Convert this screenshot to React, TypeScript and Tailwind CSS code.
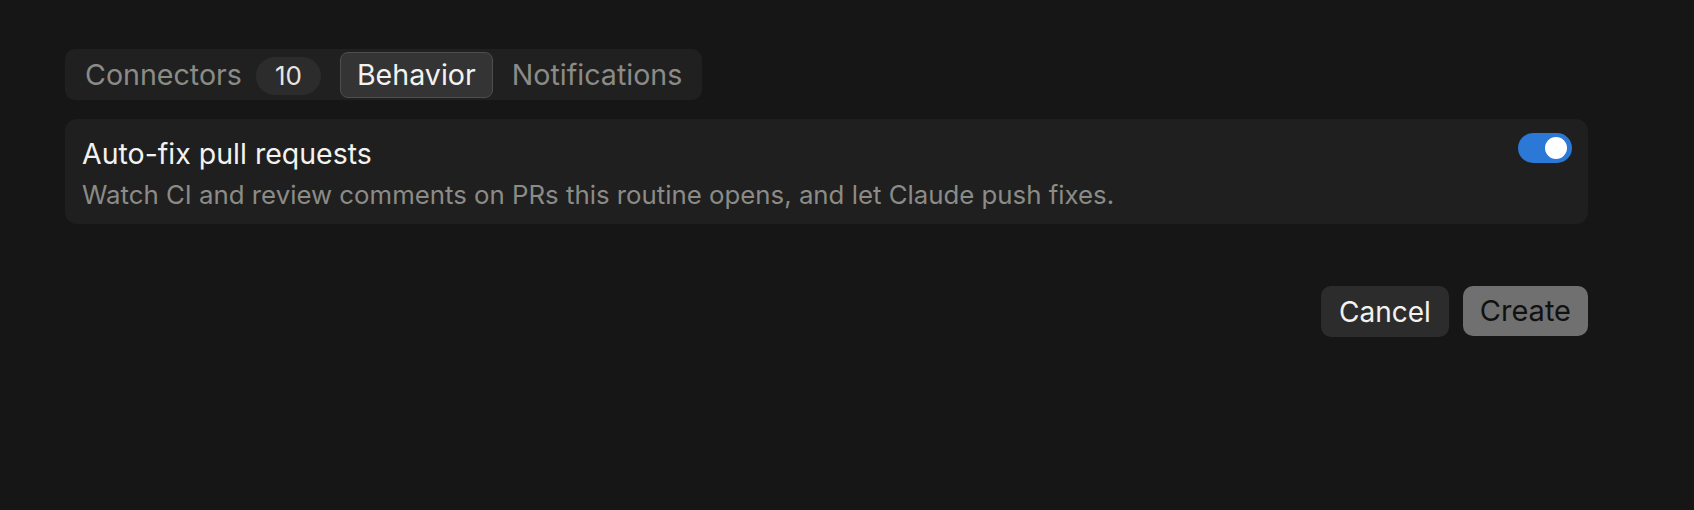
import { useState } from 'react';

const TABS = ['Connectors', 'Behavior', 'Notifications'];

export default function App() {
  const [tab, setTab] = useState('Behavior');
  const [autoFix, setAutoFix] = useState(true);

  return (
    <div
      className="w-full h-[510px] bg-[#161616] pt-[49px] pl-[65px] pr-[106px]"
      style={{ fontFamily: 'Inter, "Noto Sans", sans-serif' }}
    >
      {/* Tabs */}
      <div className="inline-flex items-center h-[51px] px-[3px] gap-[2px] rounded-[10px] bg-[#202020]">
        {TABS.map(t => (
          <button
            key={t}
            onClick={() => setTab(t)}
            className={
              t === tab
                ? 'flex items-center h-[46px] pt-[2px] px-[16px] rounded-[8px] bg-[#343434] border border-[#4e4e4e] text-[#f2f2f0] text-[28.6px]'
                : 'flex items-center h-[46px] pt-[2px] px-[16px] rounded-[8px] border border-transparent text-[#8b8b87] text-[28.6px]'
            }
          >
            {t}
            {t === 'Connectors' && (
              <span className="ml-[14px] flex items-center justify-center w-[65px] h-[38px] rounded-full bg-[#2c2c2c] text-[#e6e6e2] text-[26px]">
                10
              </span>
            )}
          </button>
        ))}
      </div>

      {/* Setting card */}
      <div className="mt-[19px] flex justify-between items-start rounded-[12px] bg-[#1f1f1f] pl-[17px] pr-[16px] pt-[14px] h-[105px]">
        <div className="pt-[3px]">
          <div className="text-[28.5px] leading-[36px] text-[#f2f2f0]">Auto-fix pull requests</div>
          <div className="mt-[7px] text-[25.8px] leading-[32px] text-[#8b8b87]">
            Watch CI and review comments on PRs this routine opens, and let Claude push fixes.
          </div>
        </div>
        <button
          onClick={() => setAutoFix(v => !v)}
          className={
            autoFix
              ? 'relative w-[54px] h-[30px] rounded-full bg-[#2b78d6] shrink-0'
              : 'relative w-[54px] h-[30px] rounded-full bg-[#444] shrink-0'
          }
        >
          <span
            className={
              autoFix
                ? 'absolute top-[4px] right-[5px] w-[22px] h-[22px] rounded-full bg-white'
                : 'absolute top-[4px] left-[5px] w-[22px] h-[22px] rounded-full bg-white'
            }
          />
        </button>
      </div>

      {/* Actions */}
      <div className="mt-[62px] flex justify-end gap-[14px]">
        <button className="h-[51px] px-[18px] rounded-[10px] bg-[#2c2c2c] text-[#f2f2f0] text-[28px]">Cancel</button>
        <button className="h-[50px] px-[17px] rounded-[10px] bg-[#707070] text-[#111111] text-[29px]">Create</button>
      </div>
    </div>
  );
}
